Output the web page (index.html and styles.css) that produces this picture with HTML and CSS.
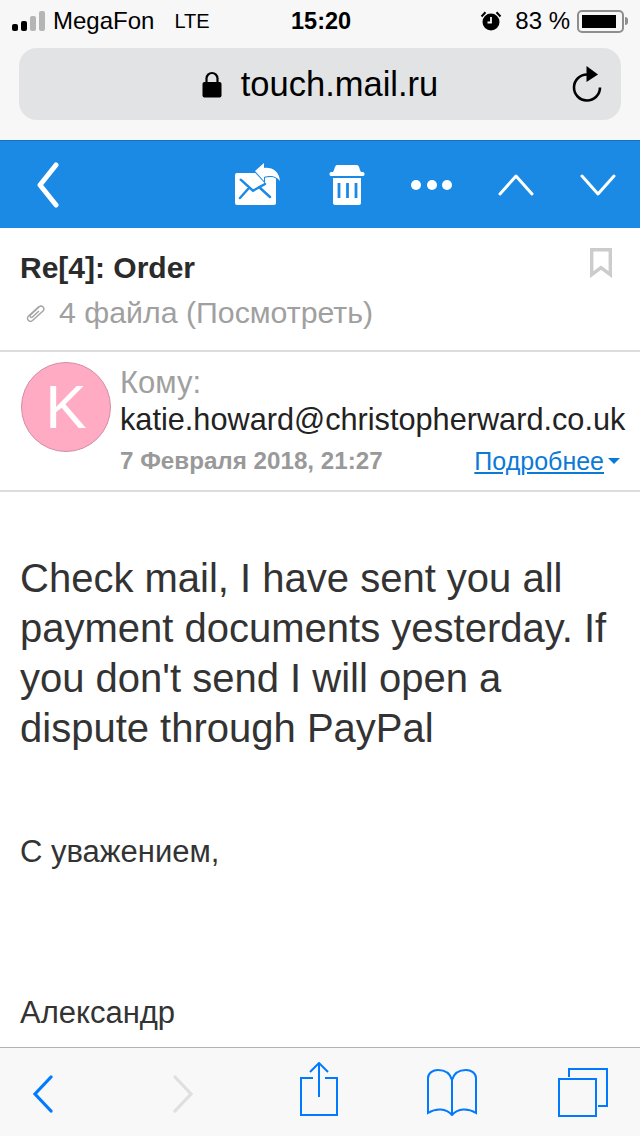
FILE: index.html
```html
<!DOCTYPE html>
<html lang="ru">

<head>
    <meta charset="UTF-8">
    <meta name="viewport" content="width=device-width, initial-scale=1.0">
    <title>touch.mail.ru</title>
    <link rel="stylesheet" href="styles.css">
</head>

<body>
    <div class="page">
        <header class="browser-top">
            <div class="status-bar">
                <div class="status-left">
                    <div class="signal">
                        <span class="bar on b1"></span>
                        <span class="bar on b2"></span>
                        <span class="bar b3"></span>
                        <span class="bar b4"></span>
                    </div>
                    <span class="carrier">MegaFon</span>
                    <span class="network">LTE</span>
                </div>
                <div class="clock">15:20</div>
                <div class="status-right">
                    <svg class="alarm" width="22" height="22" viewBox="0 0 22 22">
                        <circle cx="11" cy="12" r="8.5" fill="#000"/>
                        <path d="M11 7v5.5H7.5" fill="none" stroke="#f7f7f7" stroke-width="1.8"/>
                        <path d="M1.5 6.5 5.5 2.2M20.5 6.5 16.5 2.2" stroke="#000" stroke-width="2"/>
                    </svg>
                    <span class="battery-text">83 %</span>
                    <div class="battery"><div class="battery-fill"></div></div>
                    <div class="battery-tip"></div>
                </div>
            </div>
            <div class="address-bar">
                <div class="address">
                    <svg width="20" height="27" viewBox="0 0 20 27">
                        <path d="M4.5 12V7.5a5.5 5.5 0 0 1 11 0V12" fill="none" stroke="#000" stroke-width="2.2"/>
                        <rect x="0.5" y="11" width="19" height="15.5" rx="2" fill="#000"/>
                    </svg>
                    <span>touch.mail.ru</span>
                </div>
                <svg class="reload" width="32" height="38" viewBox="0 0 32 38">
                    <path d="M16.500 9.500A13 13 0 1 0 29 22.500" fill="none" stroke="#000" stroke-width="2.600"/>
                    <path d="M15.500 1 27 9.500 15.500 17z" fill="#000"/>
                </svg>
            </div>
        </header>

        <nav class="mail-nav">
            <svg class="back-icon" width="24" height="46" viewBox="0 0 24 46">
                <path d="M20 3 4 23l16 20" fill="none" stroke="#fff" stroke-width="5" stroke-linecap="round" stroke-linejoin="round"/>
            </svg>
            <div class="nav-actions">
                <svg class="nav-icon mail-reply" width="46" height="44" viewBox="0 0 46 44">
                    <rect x="0" y="10" width="41" height="32" rx="2" fill="#fff"/>
                    <path d="M5.700 16.700 18 27.700 30 21M5 35l8-9M35 34 24 24" fill="none" stroke="#1a8ae5" stroke-width="2.400" stroke-linecap="round"/>
                    <path d="M29 0v5c8-1 15 3 16 13-3-4-7-5-9-5-3 0-5 0-7 1v4L20 8z" fill="#fff" stroke="#1a8ae5" stroke-width="2" paint-order="stroke"/>
                </svg>
                <svg class="nav-icon" width="36" height="40" viewBox="0 0 36 40">
                    <path d="M8 0h20c1 0 2 1 3 5l1 2h2c2 0 2 4 0 4H2c-2 0-2-4 0-4h2l1-2c1-4 2-5 3-5z" fill="#fff"/>
                    <path d="M4 13h28v25c0 1-1 2-2 2H6c-1 0-2-1-2-2z" fill="#fff"/>
                    <path d="M10 18v15M18.500 18v15M27 18v15" stroke="#1a8ae5" stroke-width="2.800"/>
                </svg>
                <div class="dots"><span></span><span></span><span></span></div>
                <svg class="nav-icon" width="36" height="24" viewBox="0 0 36 24">
                    <path d="M2 21 18 3l16 18" fill="none" stroke="#fff" stroke-width="3" stroke-linecap="round" stroke-linejoin="round"/>
                </svg>
                <svg class="nav-icon" width="36" height="24" viewBox="0 0 36 24">
                    <path d="M2 3l16 18L34 3" fill="none" stroke="#fff" stroke-width="3" stroke-linecap="round" stroke-linejoin="round"/>
                </svg>
            </div>
        </nav>

        <main class="mail">
            <section class="subject">
                <div class="subject-row">
                    <h1>Re[4]: Order</h1>
                    <svg class="bookmark" width="22" height="30" viewBox="0 0 22 30">
                        <path d="M1.700 1.700h18.600v25l-9.300-7-9.300 7z" fill="none" stroke="#ccc" stroke-width="3.400"/>
                    </svg>
                </div>
                <div class="files">
                    <svg width="20" height="20" viewBox="0 0 20 20">
                        <path d="M14 3.500 3.500 13a3 3 0 0 0 4 4.500L18 8a2.800 2.800 0 0 0-4-4L5.500 12a1.300 1.300 0 0 0 2 2L14 8" fill="none" stroke="#a3a3a3" stroke-width="1.400"/>
                    </svg>
                    <span>4 файла (Посмотреть)</span>
                </div>
            </section>

            <section class="sender">
                <div class="avatar">K</div>
                <div class="sender-info">
                    <div class="to-label">Кому:</div>
                    <div class="to-email">katie.howard@christopherward.co.uk</div>
                    <div class="meta-row">
                        <span class="date">7 Февраля 2018, 21:27</span>
                        <a class="details" href="#">Подробнее</a>
                        <span class="caret"></span>
                    </div>
                </div>
            </section>

            <section class="body-text">
                <p class="message">Check mail, I have sent you all payment documents yesterday. If you don't send I will open a dispute through PayPal</p>
                <p class="regards">С уважением,</p>
                <p class="name">Александр</p>
            </section>
        </main>

        <footer class="toolbar">
            <svg class="tool-back" width="22" height="38" viewBox="0 0 22 38">
                <path d="M19 2 3 19l16 17" fill="none" stroke="#007aff" stroke-width="3.200" stroke-linecap="round"/>
            </svg>
            <svg class="tool-forward" width="22" height="38" viewBox="0 0 22 38">
                <path d="M3 2l16 17L3 36" fill="none" stroke="#dfdfdf" stroke-width="3.200" stroke-linecap="round"/>
            </svg>
            <svg class="tool-share" width="38" height="54" viewBox="0 0 38 54">
                <path d="M13 16H1v37h36V16H25M19 35V2M10 10l9-9 9 9" fill="none" stroke="#007aff" stroke-width="2"/>
            </svg>
            <svg class="tool-book" width="50" height="48" viewBox="0 0 50 48">
                <path d="M25 46V12C23 5 18 2 11 2 6 2 1 5 1 10v35c8-5 18-5 24 2 6-7 16-7 24-2V10c0-5-5-8-10-8-7 0-12 3-14 10" fill="none" stroke="#007aff" stroke-width="2"/>
            </svg>
            <svg class="tool-tabs" width="50" height="49" viewBox="0 0 50 49">
                <path d="M1 11h37v37H1z" fill="none" stroke="#007aff" stroke-width="2"/>
                <path d="M11 9V1h38v37h-9" fill="none" stroke="#007aff" stroke-width="2"/>
            </svg>
        </footer>
    </div>
</body>
</html>
```

FILE: styles.css
```css
body {
    font-family: 'Liberation Sans', Arial, sans-serif;
    background-color: white;
    margin: 0;
    padding: 0;
}

.page {
    display: flex;
    flex-direction: column;
    height: 1136px;
    overflow: hidden;
}

/* Browser chrome */
.browser-top {
    flex: none;
    height: 140px;
    background-color: #f7f7f7;
}

.status-bar {
    display: flex;
    align-items: center;
    height: 48px;
    padding: 0 12px 6px 12px;
    box-sizing: border-box;
    color: #000;
}

.status-left {
    flex: none;
    display: flex;
    align-items: center;
    width: 279px;
}

.signal {
    display: flex;
    align-items: flex-end;
    gap: 3px;
    height: 20px;
}

.bar {
    width: 6px;
    border-radius: 2px;
    background-color: #b5b5b5;
}

.bar.on {
    background-color: #000;
}

.b1 { height: 7px; }
.b2 { height: 10px; }
.b3 { height: 15px; }
.b4 { height: 20px; }

.carrier {
    font-size: 24px;
    margin-left: 8px;
}

.network {
    font-size: 20px;
    margin-left: 20px;
}

.clock {
    font-size: 23.5px;
    font-weight: 700;
    margin-right: auto;
}

.status-right {
    display: flex;
    align-items: center;
}

.battery-text {
    font-size: 24px;
    margin-left: 13px;
}

.battery {
    width: 47px;
    height: 23px;
    margin-left: 7px;
    padding: 3px;
    box-sizing: border-box;
    border: 2px solid #8e8e8e;
    border-radius: 5px;
}

.battery-fill {
    width: 34px;
    height: 100%;
    background-color: #000;
}

.battery-tip {
    width: 3px;
    height: 8px;
    margin-left: 1px;
    background-color: #8e8e8e;
    border-radius: 0 3px 3px 0;
}

.address-bar {
    display: flex;
    align-items: center;
    justify-content: center;
    position: relative;
    height: 72px;
    margin: 0 19px;
    background-color: #e2e3e5;
    border-radius: 18px;
}

.address {
    display: flex;
    align-items: center;
    gap: 19px;
    font-size: 34.5px;
    color: #000;
}

.reload {
    position: absolute;
    right: 18px;
    top: 17px;
}

/* Mail header */
.mail-nav {
    flex: none;
    display: flex;
    align-items: center;
    justify-content: space-between;
    height: 88px;
    padding: 0 24px 0 36px;
    box-sizing: border-box;
    background-color: #1a8ae5;
    border-top: 1px solid #1672c0;
}

.nav-actions {
    display: flex;
    align-items: center;
    gap: 46px;
}

.mail-reply {
    margin-right: 2px;
}

.dots {
    display: flex;
    gap: 5.5px;
}

.dots span {
    width: 10px;
    height: 10px;
    border-radius: 50%;
    background-color: #fff;
}

/* Mail content */
.mail {
    flex: 1;
    min-height: 0;
    overflow: hidden;
    color: #333;
}

.subject {
    height: 124px;
    padding: 20px 28px 0 20px;
    box-sizing: border-box;
    border-bottom: 2px solid #dcdcdc;
}

.subject-row {
    display: flex;
    align-items: flex-start;
    justify-content: space-between;
}

.subject h1 {
    margin: 0;
    font-size: 30px;
    line-height: 40px;
    font-weight: 700;
    color: #2b2b2b;
}

.files {
    display: flex;
    align-items: center;
    gap: 14px;
    margin: 7px 0 0 5px;
    font-size: 30.3px;
    line-height: 36px;
    color: #a0a0a0;
}

.sender {
    display: flex;
    gap: 9px;
    height: 140px;
    padding: 10px 0 0 21px;
    box-sizing: border-box;
    border-bottom: 2px solid #dcdcdc;
}

.avatar {
    flex: none;
    box-sizing: border-box;
    width: 90px;
    height: 90px;
    border-radius: 50%;
    background-color: #ffabc4;
    border: 1px solid #d48da5;
    color: #fff;
    font-size: 62px;
    line-height: 88px;
    text-align: center;
}

.sender-info {
    flex: 1;
    min-width: 0;
}

.to-label {
    font-size: 31px;
    line-height: 42px;
    color: #a0a0a0;
}

.to-email {
    font-size: 30.7px;
    line-height: 36px;
    margin-top: -2px;
    color: #222;
    white-space: nowrap;
}

.meta-row {
    display: flex;
    align-items: center;
    margin-top: 7px;
    line-height: 32px;
}

.date {
    flex: 1;
    font-size: 24.2px;
    font-weight: 700;
    color: #999;
}

.details {
    font-size: 25px;
    color: #0a7ad6;
}

.caret {
    width: 0;
    height: 0;
    margin: 0 20px 0 4px;
    border-left: 6px solid transparent;
    border-right: 6px solid transparent;
    border-top: 6px solid #0a7ad6;
}

.body-text {
    padding: 61px 20px 0;
    color: #333;
}

.body-text p {
    margin: 0;
}

.body-text .message {
    font-size: 40px;
    line-height: 50px;
}

.body-text .regards {
    margin-top: 81px;
    font-size: 31px;
    line-height: 36px;
}

.body-text .name {
    margin-top: 125px;
    font-size: 31px;
    line-height: 36px;
}

/* Safari toolbar */
.toolbar {
    flex: none;
    display: flex;
    align-items: center;
    height: 89px;
    padding: 0 0 0 32px;
    box-sizing: border-box;
    background-color: #f8f8f8;
    border-top: 1px solid #b2b2b2;
}

.tool-back {
    margin-top: 3px;
}

.tool-forward {
    margin: 3px 0 0 118px;
}

.tool-share {
    margin: -6px 0 0 106px;
}

.tool-book {
    margin-left: 89px;
}

.tool-tabs {
    margin-left: 81px;
}
```
